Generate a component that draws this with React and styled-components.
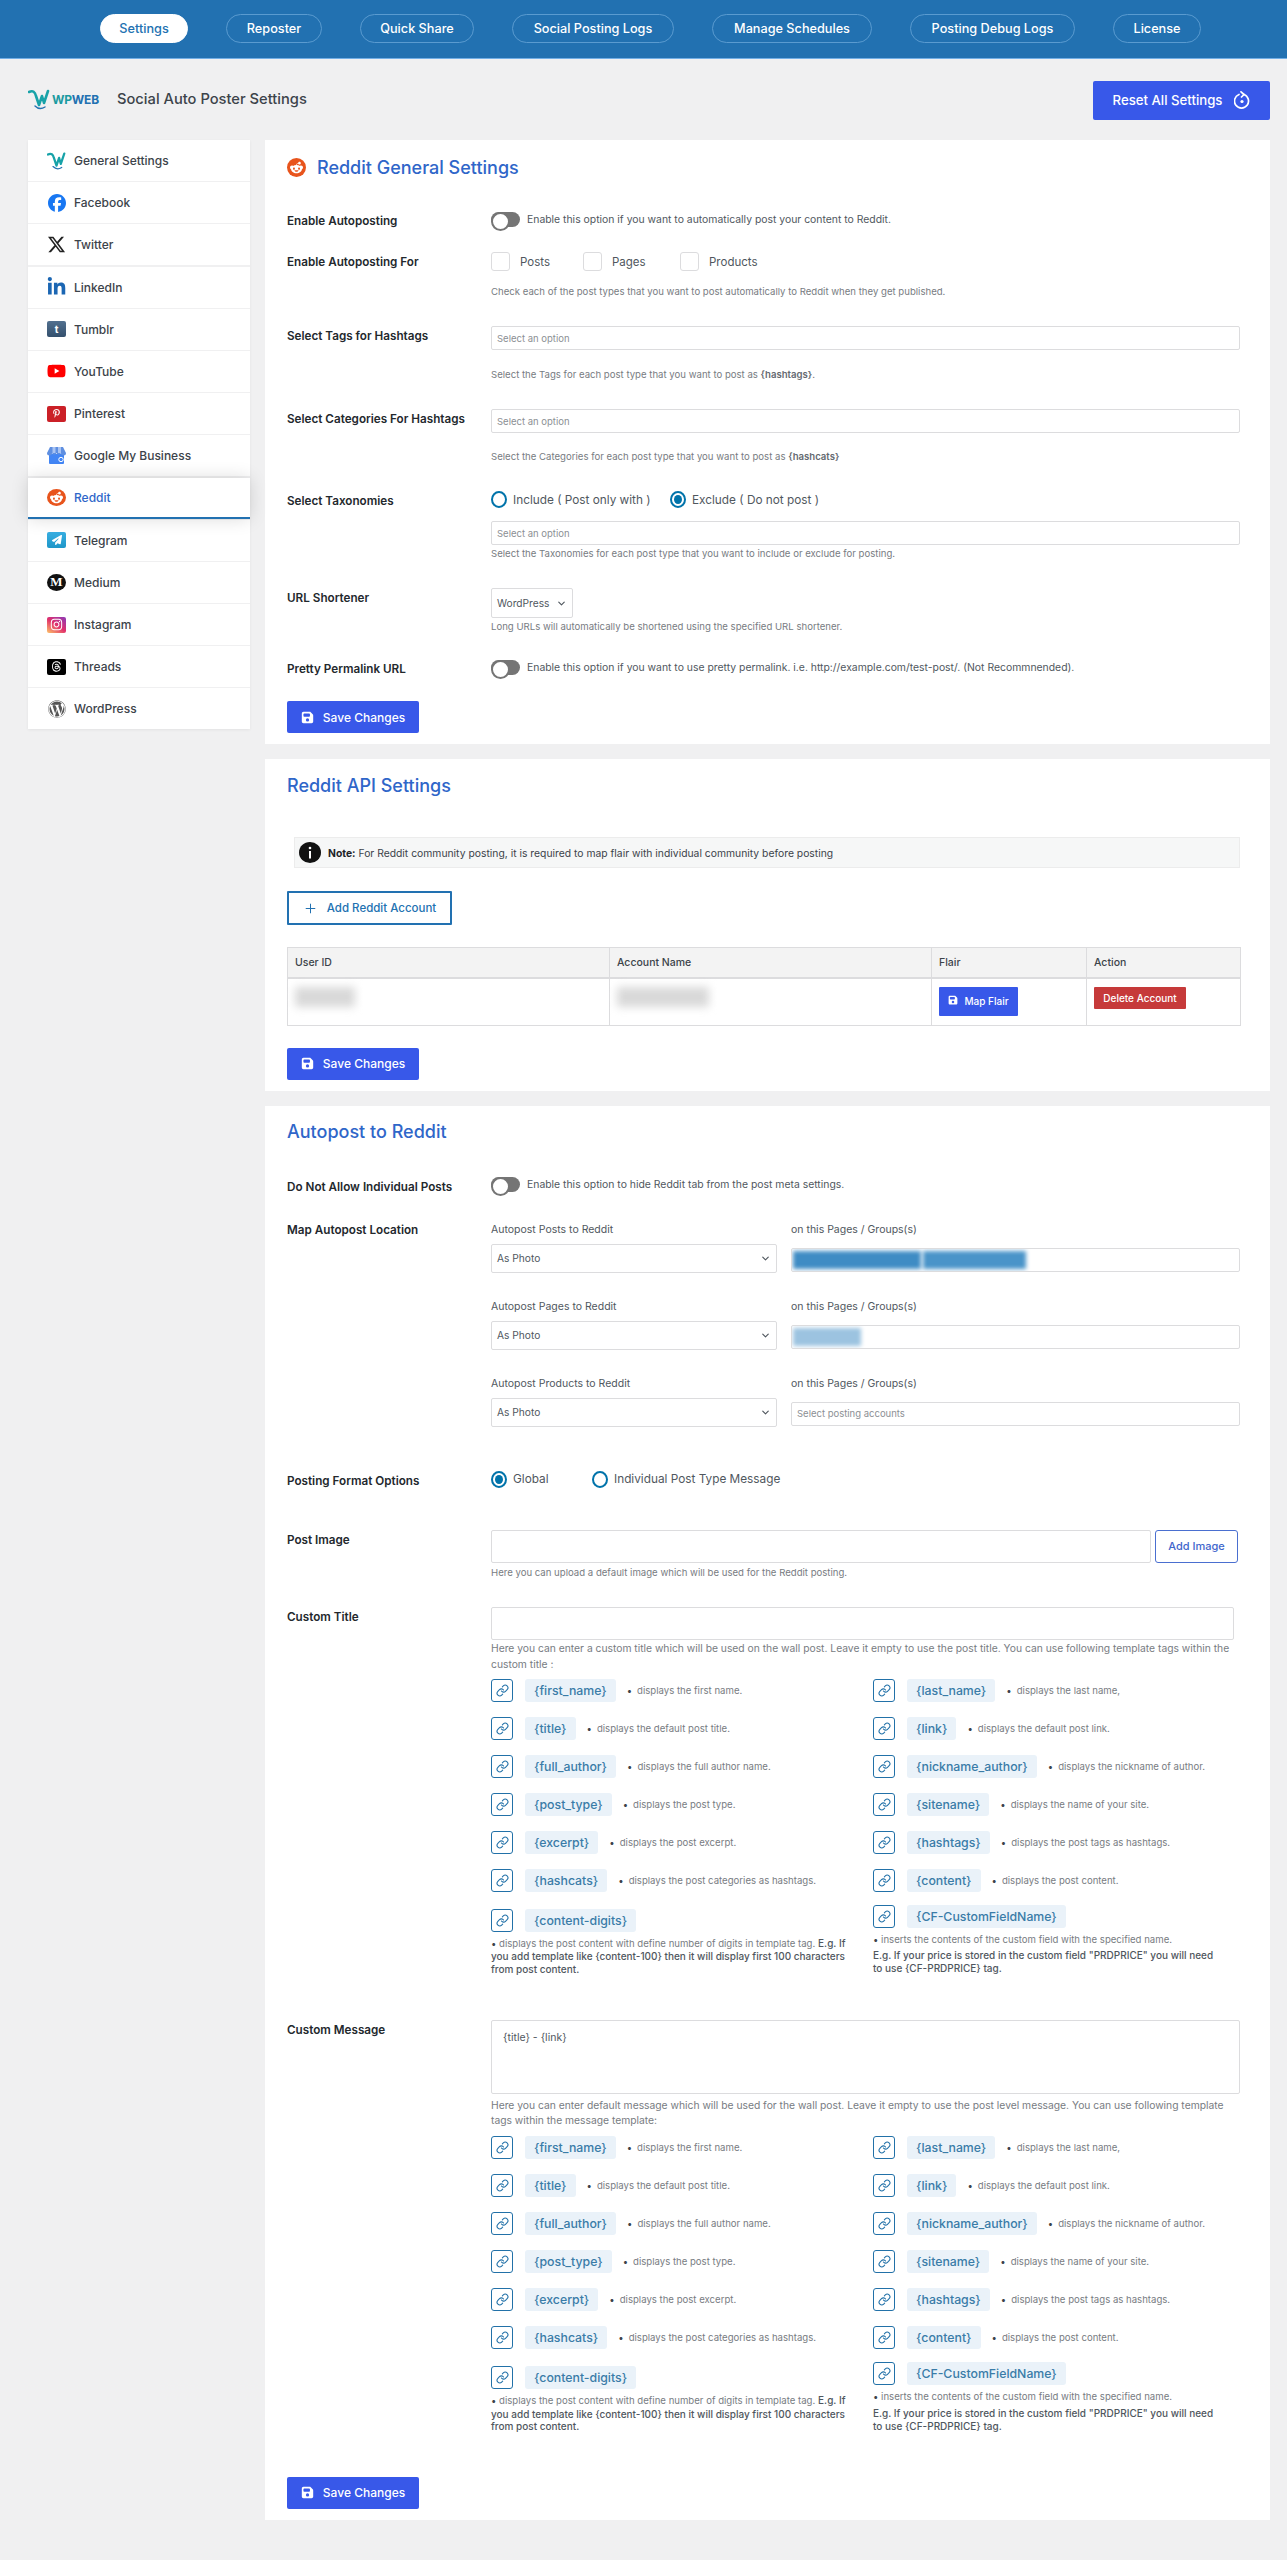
import React from "react";
import styled, { createGlobalStyle } from "styled-components";
import { Link, Plus, ChevronDown } from "lucide-react";
import {
  FaFacebook,
  FaXTwitter,
  FaLinkedinIn,
  FaYoutube,
  FaPinterestP,
  FaRedditAlien,
  FaPaperPlane,
  FaInstagram,
  FaThreads,
  FaWordpress,
  FaFloppyDisk
} from "react-icons/fa6";

const Global = createGlobalStyle`
  body {
    margin: 0;
    background: #f0f0f1;
    font-family: Inter, "Noto Sans", sans-serif;
    color: #3c434a;
  }
  * { box-sizing: border-box; }
`;

const Header = styled.header`
  height: 59px;
  background: #2271b1;
  border-bottom: 1px solid #72aee6;
  display: flex;
  align-items: flex-start;
  padding: 14px 0 0 100px;
  gap: 38px;
`;

const Pill = styled.a`
  height: 29px;
  width: ${p => p.$w}px;
  flex: none;
  display: flex;
  align-items: center;
  justify-content: center;
  border-radius: 15px;
  font-size: 12.7px;
  font-weight: 500;
  color: ${p => (p.$active ? "#2271b1" : "#fff")};
  background: ${p => (p.$active ? "#fff" : "transparent")};
  border: 1px solid ${p => (p.$active ? "#fff" : "#5a9bd0")};
`;

const TitleBar = styled.div`
  height: 80px;
  padding: 0 17px 0 28px;
  display: flex;
  align-items: center;
`;

const Logo = styled.div`
  width: 74px;
  display: flex;
  align-items: center;
  gap: 2px;
`;

const LogoText = styled.span`
  font-size: 12px;
  font-weight: 700;
  letter-spacing: -0.2px;
  color: #1a9aa0;
  & > b {
    color: #2271b1;
    font-weight: 700;
  }
`;

const PageTitle = styled.h1`
  margin: 0 0 0 15px;
  font-size: 14.7px;
  font-weight: 500;
  color: #3c434a;
  flex: 1;
`;

const ResetButton = styled.button`
  width: 177px;
  height: 39px;
  border: 0;
  border-radius: 2px;
  background: #3858e9;
  color: #fff;
  font: 500 13.2px Inter, sans-serif;
  display: flex;
  align-items: center;
  justify-content: center;
  gap: 12px;
  margin-top: 2px;
`;

const Layout = styled.div`
  display: grid;
  grid-template-columns: 222px 1005px;
  gap: 15px;
  padding: 1px 0 39px 28px;
  align-items: start;
`;

const Sidebar = styled.nav`
  display: flex;
  flex-direction: column;
  gap: 1.2px;
  box-shadow: 0 1px 3px rgba(0, 0, 0, 0.06);
`;

const SideItem = styled.a`
  height: 41px;
  background: #fff;
  display: flex;
  align-items: center;
  gap: 8px;
  padding-left: 19px;
  font-size: 12px;
  font-weight: 500;
  color: ${p => (p.$active ? "#2f66c9" : "#3c434a")};
  border-bottom: ${p => (p.$active ? "2px solid #2271b1" : "0")};
  box-shadow: ${p => (p.$active ? "0 0 18px rgba(0,0,0,0.14)" : "none")};
  position: relative;
  z-index: ${p => (p.$active ? 1 : 0)};
`;

const IconSlot = styled.span`
  width: 19px;
  height: 19px;
  flex: none;
  display: flex;
  align-items: center;
  justify-content: center;
  color: ${p => p.$color || "#333"};
  font-size: ${p => p.$size || 18}px;
`;

const SquareIcon = styled.span`
  width: 19px;
  height: ${p => p.$h || 16}px;
  border-radius: 2px;
  background: ${p => p.$bg};
  color: #fff;
  display: flex;
  align-items: center;
  justify-content: center;
  font-size: ${p => p.$size || 10}px;
  font-weight: 700;
`;

const RoundIcon = styled.span`
  width: ${p => p.$d || 19}px;
  height: ${p => p.$d || 17}px;
  border-radius: 50%;
  background: ${p => p.$bg};
  color: #fff;
  display: flex;
  align-items: center;
  justify-content: center;
  font-size: ${p => p.$size || 11}px;
`;

const MediumLetter = styled.span`
  font-family: "Liberation Serif", serif;
  font-weight: 700;
  font-size: 13px;
`;

const Main = styled.main`
  display: flex;
  flex-direction: column;
  gap: 15px;
`;

const Card = styled.section`
  background: #fff;
  padding: 0 30px ${p => p.$bottom || 11}px 22px;
`;

const CardTitle = styled.h2`
  margin: 0;
  height: ${p => p.$h || 52}px;
  display: flex;
  align-items: center;
  gap: 11px;
  font-size: 18px;
  font-weight: 500;
  color: #2f66c9;
`;

const FormRow = styled.div`
  display: grid;
  grid-template-columns: 204px 1fr;
  margin-top: ${p => p.$top || 0}px;
`;

const Label = styled.div`
  padding-top: 3px;
  font-size: 11.7px;
  line-height: 14px;
  font-weight: 600;
  color: #23282d;
`;

const Control = styled.div`
  min-width: 0;
`;

const ToggleLine = styled.div`
  display: flex;
  align-items: center;
  gap: 7px;
  height: 16px;
  font-size: 10.4px;
  color: #50575e;
`;

const Toggle = styled.span`
  width: 29px;
  height: 15px;
  border-radius: 8px;
  background: #757575;
  flex: none;
  position: relative;
  &::before {
    content: "";
    position: absolute;
    left: 0;
    top: 0;
    width: 15px;
    height: 15px;
    border-radius: 50%;
    background: #fff;
    border: 2px solid #757575;
  }
`;

const CheckLine = styled.div`
  display: flex;
  height: 19px;
  align-items: center;
`;

const CheckItem = styled.label`
  width: ${p => p.$w}px;
  display: flex;
  align-items: center;
  gap: 10px;
  font-size: 11.5px;
  color: #50575e;
`;

const Box = styled.span`
  width: 19px;
  height: 19px;
  flex: none;
  background: #fff;
  border: 1px solid #dcdcde;
  border-radius: 3px;
`;

const Hint = styled.div`
  margin-top: ${p => p.$top || 0}px;
  font-size: ${p => p.$size || 9.6}px;
  line-height: ${p => p.$lh || 14}px;
  color: #787c82;
  & > b {
    font-weight: 600;
    color: #646970;
  }
`;

const Field = styled.div`
  height: ${p => p.$h || 24}px;
  margin-top: ${p => p.$top || 0}px;
  margin-right: ${p => p.$right || 0}px;
  width: ${p => p.$w || "auto"};
  flex: ${p => (p.$grow ? 1 : "none")};
  background: #fff;
  border: 1px solid #dcdcde;
  border-radius: 2px;
  padding: 0 ${p => (p.$flush ? 1 : 5)}px;
  display: flex;
  align-items: center;
  justify-content: ${p => (p.$select ? "space-between" : "flex-start")};
  font-size: ${p => (p.$select ? 10.2 : 9.5)}px;
  color: ${p => (p.$select ? "#50575e" : "#8c8f94")};
  gap: 3px;
  overflow: hidden;
`;

const TextArea = styled.div`
  height: 74px;
  background: #fff;
  border: 1px solid #dcdcde;
  border-radius: 2px;
  padding: 10px 11px;
  font-size: 10.5px;
  line-height: 14px;
  color: #50575e;
`;

const RadioLine = styled.div`
  display: flex;
  align-items: center;
  height: 17px;
`;

const RadioItem = styled.label`
  width: ${p => p.$w}px;
  flex: none;
  display: flex;
  align-items: center;
  gap: 6px;
  font-size: 11.8px;
  color: #50575e;
`;

const Radio = styled.span`
  width: 16px;
  height: 17px;
  flex: none;
  border-radius: 50%;
  border: 2px solid #0073aa;
  background: #fff;
  position: relative;
  &::after {
    content: "";
    display: ${p => (p.$checked ? "block" : "none")};
    position: absolute;
    inset: 2px;
    border-radius: 50%;
    background: #0073aa;
  }
`;

const SaveButton = styled.button`
  width: 132px;
  height: 32px;
  margin-top: ${p => p.$top || 0}px;
  border: 0;
  border-radius: 2px;
  background: #3858e9;
  color: #fff;
  font: 500 12px Inter, sans-serif;
  display: flex;
  align-items: center;
  justify-content: center;
  gap: 9px;
`;

const Note = styled.div`
  margin: 26px 0 0 7px;
  height: 31px;
  background: #f6f7f7;
  border: 1px solid #ececec;
  display: flex;
  align-items: center;
  gap: 7px;
  padding-left: 4px;
  font-size: 10.35px;
  color: #3c434a;
  & b {
    font-weight: 700;
    color: #1d2327;
  }
`;

const AddButton = styled.button`
  width: 165px;
  height: 34px;
  margin-top: 23px;
  background: #fff;
  border: 2px solid #2271b1;
  border-radius: 1px;
  color: #2271b1;
  font: 500 11.5px Inter, sans-serif;
  display: flex;
  align-items: center;
  justify-content: center;
  gap: 9px;
`;

const AccountTable = styled.table`
  margin-top: 22px;
  width: 953px;
  table-layout: fixed;
  border-collapse: collapse;
  font-size: 10.5px;
  color: #3c434a;
  & th,
  & td {
    border: 1px solid #dcdcde;
    text-align: left;
    vertical-align: top;
    padding: 8px 7px;
  }
  & th {
    height: 29px;
    background: #f3f3f3;
    font-weight: 500;
    border-bottom-width: 2px;
  }
  & td {
    height: 47px;
  }
`;

const Blurred = styled.div`
  width: ${p => p.$w}px;
  height: ${p => p.$h || 20}px;
  background: ${p => p.$bg || "#d9d9d9"};
  filter: blur(${p => p.$blur || 4}px);
`;

const MapFlair = styled.button`
  width: 79px;
  height: 29px;
  border: 0;
  border-radius: 1px;
  background: #3858e9;
  color: #fff;
  font: 500 10px Inter, sans-serif;
  display: flex;
  align-items: flex-start;
  justify-content: center;
  gap: 6px;
  padding-top: 8px;
`;

const DeleteButton = styled.button`
  width: 92px;
  height: 22px;
  border: 0;
  border-radius: 1px;
  background: #c63a3a;
  color: #fff;
  font: 500 10px Inter, sans-serif;
`;

const MapGrid = styled.div`
  padding-top: 3px;
  display: grid;
  grid-template-columns: 286px 449px;
  column-gap: 14px;
  row-gap: 27px;
`;

const MapCell = styled.div``;

const SubLabel = styled.div`
  font-size: 10.5px;
  line-height: 14px;
  color: #50575e;
`;

const SelectedChips = styled.div`
  display: flex;
  align-items: center;
  gap: 2px;
`;

const ImageRow = styled.div`
  display: flex;
  gap: 4px;
  margin-right: 2px;
`;

const AddImage = styled.button`
  width: 83px;
  height: 33px;
  flex: none;
  background: #fff;
  border: 1.5px solid #4a6fd0;
  border-radius: 3px;
  color: #3f66cc;
  font: 500 11px Inter, sans-serif;
`;

const TagGrid = styled.div`
  margin-top: ${p => p.$top}px;
  display: grid;
  grid-template-columns: 382px 1fr;
  row-gap: 15px;
`;

const TagRow = styled.div`
  display: flex;
  align-items: center;
  height: 23px;
`;

const TagCell = styled.div`
  margin-top: ${p => p.$top || 0}px;
  padding-right: ${p => p.$pad || 0}px;
`;

const LinkBox = styled.span`
  width: 22px;
  height: 23px;
  flex: none;
  margin-right: 12px;
  border: 1.5px solid #2271a8;
  border-radius: 3px;
  color: #2271a8;
  display: flex;
  align-items: center;
  justify-content: center;
`;

const Tag = styled.code`
  height: 23px;
  padding: 0 9px;
  flex: none;
  display: flex;
  align-items: center;
  background: #eaf2f9;
  border-radius: 3px;
  font: 500 12.3px Inter, sans-serif;
  color: #3a7ca8;
`;

const TagDesc = styled.span`
  margin-left: 11px;
  font-size: 9.6px;
  color: #787c82;
  &::before {
    content: "•";
    margin-right: 5px;
    color: #3c434a;
  }
`;

const LongDesc = styled.div`
  margin-top: ${p => p.$top || 0}px;
  font-size: 10px;
  line-height: ${p => p.$lh || 12.5}px;
  color: #50575e;
  font-weight: ${p => (p.$strong ? 500 : 400)};
  & > b {
    font-weight: 500;
  }
  & > em {
    font-size: 9.6px;
    font-style: normal;
    color: #787c82;
    font-weight: 400;
  }
  & > em::before {
    content: "• ";
    color: #3c434a;
  }
`;

const pills = [
  ["Settings", 88],
  ["Reposter", 96],
  ["Quick Share", 114],
  ["Social Posting Logs", 162],
  ["Manage Schedules", 160],
  ["Posting Debug Logs", 165],
  ["License", 88]
];

const LogoMark = ({ size = 22 }) => (
  <svg width={size} height={size} viewBox="0 0 22 22" fill="none">
    <path d="M1 4 C5 2 7 4 8 8 L11 17 L14 8 L16 15 L20 3" stroke="#17a2a8" strokeWidth="2.6" strokeLinecap="round" strokeLinejoin="round" />
    <path d="M7 18 C10 21 14 21 17 19" stroke="#2271b1" strokeWidth="1.4" strokeLinecap="round" />
  </svg>
);

const GmbIcon = () => (
  <svg width="19" height="17" viewBox="0 0 19 17">
    <path d="M2 7h15v9a1 1 0 0 1-1 1H3a1 1 0 0 1-1-1z" fill="#4285f4" />
    <path d="M3 0h13l3 6a2.5 2.5 0 0 1-5 0 2.4 2.4 0 0 1-4.500 0 2.400 2.400 0 0 1-4.500 0 2.500 2.500 0 0 1-5 0z" fill="#5f8fe0" />
    <path d="M5.500 0h3v6h-3zM11 0h3v6h-3z" fill="#a9c4f3" />
    <circle cx="14" cy="12.500" r="2.200" fill="none" stroke="#fff" strokeWidth="1" />
  </svg>
);

const ResetIcon = () => (
  <svg width="16" height="18" viewBox="0 0 16 18" fill="none" stroke="#fff" strokeWidth="1.7" strokeLinecap="round">
    <path d="M5 3.500a7 7 0 1 0 5 0" />
    <path d="M7 0.800 10 3.500 7.500 6" strokeLinejoin="round" />
    <circle cx="8" cy="10.500" r="1.600" fill="#fff" stroke="none" />
  </svg>
);

const NoteBadge = () => (
  <svg width="22" height="21" viewBox="0 0 22 21">
    <ellipse cx="11" cy="10.500" rx="11" ry="10.500" fill="#111" />
    <rect x="10" y="9" width="2" height="7.500" fill="#fff" />
    <circle cx="11" cy="6" r="1.300" fill="#fff" />
  </svg>
);

const networks = [
  { name: "General Settings", icon: <LogoMark size={19} /> },
  { name: "Facebook", icon: <IconSlot $color="#1877f2"><FaFacebook /></IconSlot> },
  { name: "Twitter", icon: <IconSlot $color="#222" $size={19}><FaXTwitter /></IconSlot> },
  { name: "LinkedIn", icon: <IconSlot $color="#1b66b3" $size={20}><FaLinkedinIn /></IconSlot> },
  { name: "Tumblr", icon: <SquareIcon $bg="linear-gradient(#52708f,#34506d)">t</SquareIcon> },
  { name: "YouTube", icon: <IconSlot $color="#f00" $size={20}><FaYoutube /></IconSlot> },
  { name: "Pinterest", icon: <SquareIcon $bg="#cb2027" $size={9}><FaPinterestP /></SquareIcon> },
  { name: "Google My Business", icon: <GmbIcon /> },
  { name: "Reddit", icon: <RoundIcon $bg="#e8541c" $size={13}><FaRedditAlien /></RoundIcon>, active: true },
  { name: "Telegram", icon: <SquareIcon $bg="linear-gradient(#37aee2,#1e96c8)" $size={10}><FaPaperPlane /></SquareIcon> },
  { name: "Medium", icon: <RoundIcon $bg="#111"><MediumLetter>M</MediumLetter></RoundIcon> },
  { name: "Instagram", icon: <SquareIcon $bg="linear-gradient(35deg,#fdc468,#e1306c 50%,#8a3ab9)" $size={13}><FaInstagram /></SquareIcon> },
  { name: "Threads", icon: <SquareIcon $bg="#000" $size={11}><FaThreads /></SquareIcon> },
  { name: "WordPress", icon: <IconSlot $color="#555"><FaWordpress /></IconSlot> }
];

const simpleTags = [
  ["{first_name}", "displays the first name.", "{last_name}", "displays the last name,"],
  ["{title}", "displays the default post title.", "{link}", "displays the default post link."],
  ["{full_author}", "displays the full author name.", "{nickname_author}", "displays the nickname of author."],
  ["{post_type}", "displays the post type.", "{sitename}", "displays the name of your site."],
  ["{excerpt}", "displays the post excerpt.", "{hashtags}", "displays the post tags as hashtags."],
  ["{hashcats}", "displays the post categories as hashtags.", "{content}", "displays the post content."]
];

const TagItem = ({ tag, desc }) => (
  <TagRow>
    <LinkBox><Link size={13} strokeWidth={2} /></LinkBox>
    <Tag>{tag}</Tag>
    {desc && <TagDesc>{desc}</TagDesc>}
  </TagRow>
);

const TemplateTags = ({ top }) => (
  <TagGrid $top={top}>
    {simpleTags.map(([a, aDesc, b, bDesc]) => (
      <React.Fragment key={a}>
        <TagItem tag={a} desc={aDesc} />
        <TagItem tag={b} desc={bDesc} />
      </React.Fragment>
    ))}
    <TagCell $top={2} $pad={24}>
      <TagItem tag="{content-digits}" />
      <LongDesc $top={5}>
        <em>displays the post content with define number of digits in template tag.</em>{" "}
        <b>E.g. If you add template like {"{content-100}"} then it will display first 100 characters from post content.</b>
      </LongDesc>
    </TagCell>
    <TagCell $top={-2} $pad={22}>
      <TagItem tag="{CF-CustomFieldName}" />
      <LongDesc $top={5}><em>inserts the contents of the custom field with the specified name.</em></LongDesc>
      <LongDesc $top={3} $lh={13} $strong>
        E.g. If your price is stored in the custom field "PRDPRICE" you will need to use {"{CF-PRDPRICE}"} tag.
      </LongDesc>
    </TagCell>
  </TagGrid>
);

const Save = ({ top }) => (
  <SaveButton $top={top}>
    <FaFloppyDisk size={13} />
    Save Changes
  </SaveButton>
);

const mapRows = [
  { label: "Autopost Posts to Reddit", chips: [[128, "#3f8cc4"], [103, "#4a94c9"]] },
  { label: "Autopost Pages to Reddit", chips: [[68, "#9cc3e0"]] },
  { label: "Autopost Products to Reddit", chips: [] }
];

export default function App() {
  return (
    <>
      <Global />
      <Header>
        {pills.map(([name, w], i) => (
          <Pill key={name} $w={w} $active={i === 0}>{name}</Pill>
        ))}
      </Header>
      <TitleBar>
        <Logo>
          <LogoMark />
          <LogoText>WP<b>WEB</b></LogoText>
        </Logo>
        <PageTitle>Social Auto Poster Settings</PageTitle>
        <ResetButton>
          Reset All Settings
          <ResetIcon />
        </ResetButton>
      </TitleBar>
      <Layout>
        <Sidebar>
          {networks.map(n => (
            <SideItem key={n.name} $active={n.active}>
              <IconSlot>{n.icon}</IconSlot>
              {n.name}
            </SideItem>
          ))}
        </Sidebar>
        <Main>
          <Card>
            <CardTitle $h={54}>
              <RoundIcon $bg="#e8541c" $d={19} $size={13}><FaRedditAlien /></RoundIcon>
              Reddit General Settings
            </CardTitle>

            <FormRow $top={17}>
              <Label>Enable Autoposting</Label>
              <ToggleLine>
                <Toggle />
                Enable this option if you want to automatically post your content to Reddit.
              </ToggleLine>
            </FormRow>

            <FormRow $top={24}>
              <Label>Enable Autoposting For</Label>
              <Control>
                <CheckLine>
                  <CheckItem $w={92}><Box />Posts</CheckItem>
                  <CheckItem $w={97}><Box />Pages</CheckItem>
                  <CheckItem $w={100}><Box />Products</CheckItem>
                </CheckLine>
                <Hint $top={14}>Check each of the post types that you want to post automatically to Reddit when they get published.</Hint>
              </Control>
            </FormRow>

            <FormRow $top={27}>
              <Label>Select Tags for Hashtags</Label>
              <Control>
                <Field>Select an option</Field>
                <Hint $top={18}>Select the Tags for each post type that you want to post as <b>{"{hashtags}"}</b>.</Hint>
              </Control>
            </FormRow>

            <FormRow $top={27}>
              <Label>Select Categories For Hashtags</Label>
              <Control>
                <Field>Select an option</Field>
                <Hint $top={17}>Select the Categories for each post type that you want to post as <b>{"{hashcats}"}</b></Hint>
              </Control>
            </FormRow>

            <FormRow $top={27}>
              <Label>Select Taxonomies</Label>
              <Control>
                <RadioLine>
                  <RadioItem $w={179}><Radio />Include ( Post only with )</RadioItem>
                  <RadioItem $w={200}><Radio $checked />Exclude ( Do not post )</RadioItem>
                </RadioLine>
                <Field $top={13}>Select an option</Field>
                <Hint $top={2}>Select the Taxonomies for each post type that you want to include or exclude for posting.</Hint>
              </Control>
            </FormRow>

            <FormRow $top={27}>
              <Label>URL Shortener</Label>
              <Control>
                <Field $select $w="82px" $h={30}>
                  WordPress
                  <ChevronDown size={11} strokeWidth={2.5} />
                </Field>
                <Hint $top={2}>Long URLs will automatically be shortened using the specified URL shortener.</Hint>
              </Control>
            </FormRow>

            <FormRow $top={25}>
              <Label>Pretty Permalink URL</Label>
              <ToggleLine>
                <Toggle />
                Enable this option if you want to use pretty permalink. i.e. http://example.com/test-post/. (Not Recommnended).
              </ToggleLine>
            </FormRow>

            <Save top={25} />
          </Card>

          <Card>
            <CardTitle>Reddit API Settings</CardTitle>
            <Note>
              <NoteBadge />
              <span><b>Note:</b> For Reddit community posting, it is required to map flair with individual community before posting</span>
            </Note>
            <AddButton>
              <Plus size={15} strokeWidth={1.6} />
              Add Reddit Account
            </AddButton>
            <AccountTable>
              <colgroup>
                <col width="322" />
                <col width="322" />
                <col width="155" />
                <col width="154" />
              </colgroup>
              <thead>
                <tr>
                  <th>User ID</th>
                  <th>Account Name</th>
                  <th>Flair</th>
                  <th>Action</th>
                </tr>
              </thead>
              <tbody>
                <tr>
                  <td><Blurred $w={60} /></td>
                  <td><Blurred $w={92} /></td>
                  <td>
                    <MapFlair><FaFloppyDisk size={10} />Map Flair</MapFlair>
                  </td>
                  <td><DeleteButton>Delete Account</DeleteButton></td>
                </tr>
              </tbody>
            </AccountTable>
            <Save top={22} />
          </Card>

          <Card>
            <CardTitle>Autopost to Reddit</CardTitle>

            <FormRow $top={19}>
              <Label>Do Not Allow Individual Posts</Label>
              <ToggleLine>
                <Toggle />
                Enable this option to hide Reddit tab from the post meta settings.
              </ToggleLine>
            </FormRow>

            <FormRow $top={26}>
              <Label>Map Autopost Location</Label>
              <MapGrid>
                {mapRows.map(row => (
                  <React.Fragment key={row.label}>
                    <MapCell>
                      <SubLabel>{row.label}</SubLabel>
                      <Field $select $top={7} $h={29}>
                        As Photo
                        <ChevronDown size={11} strokeWidth={2.5} />
                      </Field>
                    </MapCell>
                    <MapCell>
                      <SubLabel>on this Pages / Groups(s)</SubLabel>
                      <Field $top={11} $h={24} $flush={row.chips.length > 0}>
                        {row.chips.length > 0 ? (
                          <SelectedChips>
                            {row.chips.map(([w, bg]) => (
                              <Blurred key={w} $w={w} $h={18} $bg={bg} $blur={2} />
                            ))}
                          </SelectedChips>
                        ) : (
                          "Select posting accounts"
                        )}
                      </Field>
                    </MapCell>
                  </React.Fragment>
                ))}
              </MapGrid>
            </FormRow>

            <FormRow $top={44}>
              <Label>Posting Format Options</Label>
              <RadioLine>
                <RadioItem $w={101}><Radio $checked />Global</RadioItem>
                <RadioItem $w={200}><Radio />Individual Post Type Message</RadioItem>
              </RadioLine>
            </FormRow>

            <FormRow $top={42}>
              <Label>Post Image</Label>
              <Control>
                <ImageRow>
                  <Field $h={33} $grow />
                  <AddImage>Add Image</AddImage>
                </ImageRow>
                <Hint $top={3}>Here you can upload a default image which will be used for the Reddit posting.</Hint>
              </Control>
            </FormRow>

            <FormRow $top={27}>
              <Label>Custom Title</Label>
              <Control>
                <Field $h={33} $right={6} />
                <Hint $lh={16} $size={10.3}>Here you can enter a custom title which will be used on the wall post. Leave it empty to use the post title. You can use following template tags within the custom title :</Hint>
                <TemplateTags top={7} />
              </Control>
            </FormRow>

            <FormRow $top={45}>
              <Label>Custom Message</Label>
              <Control>
                <TextArea>{"{title} - {link}"}</TextArea>
                <Hint $top={4} $lh={15} $size={10.3}>Here you can enter default message which will be used for the wall post. Leave it empty to use the post level message. You can use following template tags within the message template:</Hint>
                <TemplateTags top={8} />
              </Control>
            </FormRow>

            <Save top={44} />
          </Card>
        </Main>
      </Layout>
    </>
  );
}
